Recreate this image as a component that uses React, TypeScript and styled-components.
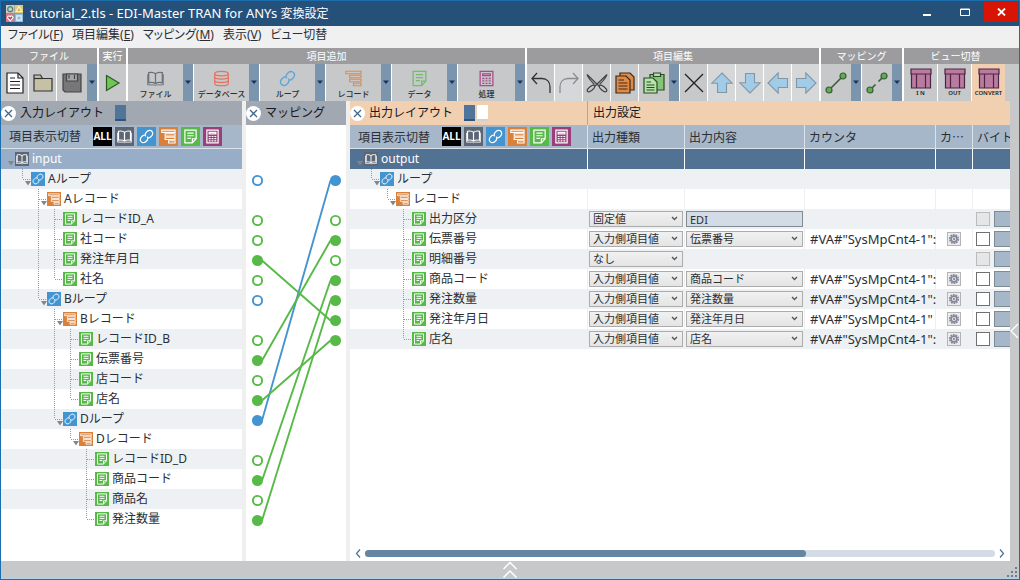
import React from "react";
import styled, { createGlobalStyle } from "styled-components";

const color = {
  frame: "#1b6fae",
  title: "#24507a",
  menu: "#f0f0f0",
  groupHead: "#9c9c9e",
  tool: "#c6c8ca",
  toolLight: "#d6d7d9",
  split: "#7b95ae",
  peach: "#f0d0b1",
  head: "#a1a8b1",
  filter: "#a6b7ca",
  tint: "#edf1f4",
  rootIn: "#98aec8",
  rootOut: "#527294",
  gutter: "#efeff0",
  blue: "#4494cf",
  green: "#57b947",
  orange: "#d9803a",
  slate: "#5c6675",
  purple: "#9a3f7c",
  text: "#2b2e33",
};

const GlobalStyle = createGlobalStyle`
  *, *::before, *::after { box-sizing: border-box; }
  body {
    margin: 0;
    font-family: "Noto Sans", "Noto Sans CJK JP", sans-serif;
    font-size: 12px;
    line-height: 20px;
    color: ${color.text};
  }
  button, input, select { font: inherit; color: inherit; margin: 0; padding: 0; }
  ul { list-style: none; margin: 0; padding: 0; }
  svg { display: block; flex: none; }
`;

/* ---------- window frame ---------- */

const Window = styled.div`
  display: flex;
  flex-direction: column;
  min-height: 100vh;
  border: 1px solid ${color.frame};
  background: ${color.tool};
  overflow: hidden;
`;

const TitleBar = styled.header`
  display: flex;
  align-items: center;
  height: 25px;
  padding: 0 1px 0 5px;
  background: ${color.title};
`;

const Title = styled.h1`
  flex: 1;
  margin: 0 0 0 7px;
  font-size: 13px;
  font-weight: 400;
  color: #fff;
  white-space: nowrap;
`;

const TitleView = styled.span`
  font-size: 12px;
`;

const WindowButton = styled.button<{ $close?: boolean }>`
  display: grid;
  place-items: center;
  align-self: flex-start;
  width: ${(p) => (p.$close ? 34 : 38)}px;
  height: 20px;
  margin-top: 1px;
  border: 0;
  background: ${(p) => (p.$close ? "#d81405" : "transparent")};
`;

const MenuBar = styled.nav`
  display: flex;
  gap: 9px;
  height: 22px;
  padding: 0 7px;
  background: ${color.menu};
`;

const MenuButton = styled.button`
  height: 18px;
  border: 0;
  background: none;
  line-height: 18px;
  font-feature-settings: "palt";
  white-space: nowrap;
`;

/* ---------- tool bar ---------- */

const ToolBar = styled.div`
  display: flex;
  gap: 2px;
  background: #fff;
  overflow: hidden;
`;

const Group = styled.section<{ $grow?: boolean }>`
  display: flex;
  flex-direction: column;
  flex: ${(p) => (p.$grow ? "1 0 auto" : "none")};
  background: ${(p) => (p.$grow ? color.tool : "#fff")};
`;

const GroupName = styled.h2<{ $trail?: boolean }>`
  height: 16px;
  margin: 0;
  padding-right: ${(p) => (p.$trail ? 12 : 0)}px;
  background: ${color.groupHead};
  color: #fff;
  font-size: 10px;
  font-weight: 400;
  line-height: 16px;
  text-align: center;
  white-space: nowrap;
`;

const GroupTools = styled.div`
  display: flex;
  gap: 1px;
  width: max-content;
  height: 37px;
  background: #fff;
`;

const Split = styled.div`
  display: flex;
`;

const ToolButton = styled.button<{ $width: number; $bg?: string }>`
  display: flex;
  flex-direction: column;
  align-items: center;
  justify-content: center;
  width: ${(p) => p.$width}px;
  border: 0;
  background: ${(p) => p.$bg ?? color.tool};
`;

const ToolLabel = styled.span`
  height: 12px;
  font-size: 8px;
  font-weight: 500;
  line-height: 14px;
  white-space: nowrap;
`;

const ViewLabel = styled.span`
  height: 8px;
  color: #222;
  font-size: 6px;
  font-weight: 600;
  line-height: 9px;
`;

const DropButton = styled.button`
  display: grid;
  place-items: center;
  width: 10px;
  border: 0;
  background: ${color.split};
`;

/* ---------- panels ---------- */

const Workspace = styled.main`
  display: flex;
  flex: 1;
  gap: 4px;
  background: ${color.gutter};
`;

const Panel = styled.section<{ $width?: number }>`
  display: flex;
  flex-direction: column;
  flex: ${(p) => (p.$width ? `0 0 ${p.$width}px` : "1 1 0")};
  min-width: 0;
  background: #fff;
`;

const PanelHead = styled.div<{ $bg?: string }>`
  display: flex;
  align-items: center;
  height: 24px;
  background: ${(p) => p.$bg ?? color.head};
`;

const CloseButton = styled.button`
  display: grid;
  place-items: center;
  width: 15px;
  height: 15px;
  border: 0;
  border-radius: 50%;
  background: #fff;
`;

const PanelName = styled.h2`
  margin: 0 11px 0 4px;
  color: #16181b;
  font-size: 12px;
  font-weight: 400;
  white-space: nowrap;
`;

const Swatch = styled.button<{ $bg: string; $edge: string }>`
  width: 11px;
  height: 16px;
  margin-right: 2px;
  border: 0;
  border-bottom: 2px solid ${(p) => p.$edge};
  background: ${(p) => p.$bg};
`;

const FilterRow = styled.div`
  display: flex;
  align-items: center;
  gap: 3px;
  height: 24px;
  padding-left: 8px;
  background: ${color.filter};
  border-bottom: 1px solid #dbe2e9;
  white-space: nowrap;
`;

const FilterLabel = styled.span`
  width: 81px;
`;

const FilterButton = styled.button<{ $bg: string }>`
  display: grid;
  place-items: center;
  width: 19px;
  height: 19px;
  border: 0;
  background: ${(p) => p.$bg};
  color: #fff;
`;

const AllText = styled.span`
  font-family: "Open Sans", "Noto Sans", sans-serif;
  font-size: 10px;
  font-weight: 700;
  line-height: 19px;
`;

/* ---------- trees ---------- */

const TreeList = styled.ul``;

const TreeItem = styled.li<{ $bg: string; $root?: boolean }>`
  height: 20px;
  background: ${(p) => p.$bg};
  color: ${(p) => (p.$root ? "#fff" : color.text)};
`;

const NodeLine = styled.div`
  display: flex;
  align-items: center;
  height: 20px;
  white-space: nowrap;
`;

const NodeIcon = styled.span<{ $bg: string }>`
  display: grid;
  place-items: center;
  flex: none;
  width: 14px;
  height: 14px;
  margin-right: 3px;
  background: ${(p) => p.$bg};
  color: #fff;
`;

/* ---------- output table ---------- */

const TableClip = styled.div`
  flex: 1;
  overflow: hidden;
`;

const Grid = styled.table`
  width: 940px;
  border-collapse: separate;
  border-spacing: 0;
  table-layout: fixed;
`;

const HeadCell = styled.th`
  height: 24px;
  padding: 0;
  background: ${color.peach};
  color: #16181b;
  font-weight: 400;
  text-align: left;
`;

const HeadText = styled.div`
  padding-left: 5px;
  border-left: 1px solid #b3a79c;
  line-height: 24px;
  margin-left: -1px;
`;

const SubHead = styled.th<{ $flush?: boolean }>`
  height: 24px;
  padding: 0 ${(p) => (p.$flush ? 0 : 4)}px;
  background: ${color.filter};
  border-right: 1px solid #dbe2e9;
  border-bottom: ${(p) => (p.$flush ? "0" : "1px solid #dbe2e9")};
  font-family: "Noto Sans CJK JP", sans-serif;
  font-weight: 400;
  line-height: 20px;
  text-align: left;
  white-space: nowrap;
`;

const Row = styled.tr<{ $bg: string; $root?: boolean }>`
  background: ${(p) => p.$bg};
  color: ${(p) => (p.$root ? "#fff" : color.text)};
  & > td {
    height: 20px;
    padding: 0;
    border-right: 1px solid ${(p) => (p.$root ? "#fff" : "#edeff1")};
    white-space: nowrap;
  }
`;

const Field = styled.div`
  position: relative;
  height: 16px;
  margin: 0 1px;
  svg { position: absolute; right: 5px; top: 5px; pointer-events: none; }
`;

const Choice = styled.select`
  display: block;
  width: 100%;
  height: 16px;
  padding-left: 3px;
  appearance: none;
  border: 1px solid #acacac;
  border-radius: 0;
  background: linear-gradient(#f1f1f1, #e4e4e4);
  font-size: 11px;
  line-height: 14px;
`;

const FixedValue = styled.input`
  display: block;
  width: 100%;
  height: 16px;
  padding-left: 3px;
  border: 1px solid #7f8b93;
  border-radius: 0;
  background: #d3dce6;
  font-size: 11px;
  line-height: 14px;
`;

const Counter = styled.div`
  height: 20px;
  padding-left: 5px;
  font-size: 13px;
  line-height: 20px;
`;

const GearButton = styled.button`
  display: grid;
  place-items: center;
  width: 14px;
  height: 14px;
  margin-left: 11px;
  border: 1px solid #b4b4b4;
  background: #ececec;
`;

const ByteLine = styled.div`
  display: flex;
  align-items: center;
  gap: 4px;
  padding-left: 3px;
`;

const Check = styled.input`
  width: 14px;
  height: 14px;
  appearance: none;
  border: 1px solid #707070;
  background: #fff;
  &:disabled { border-color: #bcbcbc; background: #e6e6e6; }
`;

const ByteInput = styled.input`
  width: 60px;
  height: 16px;
  border: 1px solid #7f8b93;
  background: ${color.filter};
`;

const ScrollRow = styled.div`
  display: flex;
  align-items: center;
  gap: 4px;
  height: 15px;
  padding: 0 5px;
`;

const Track = styled.div`
  flex: 1;
  height: 7px;
  border-radius: 4px;
  background: #d3dbe4;
`;

const Thumb = styled.div`
  width: 70%;
  height: 7px;
  border-radius: 4px;
  background: #6585a2;
`;

const PlainButton = styled.button`
  display: grid;
  place-items: center;
  border: 0;
  background: none;
`;

const SideBar = styled.aside`
  display: flex;
  align-items: center;
  width: 9px;
  margin-left: -4px;
  background: ${color.tool};
`;

const Footer = styled.footer`
  display: grid;
  grid-template-columns: 12px 1fr 12px;
  align-items: end;
  justify-items: center;
  height: 18px;
  border-bottom: 1px solid #b3d3ec;
`;

/* ---------- glyphs ---------- */

type Kind = "book" | "loop" | "record" | "data" | "calc" | "db";

const Glyph = ({ kind, size, weight = 1.6 }: { kind: Kind; size: number; weight?: number }) => (
  <svg width={size} height={size} viewBox="0 0 20 20" fill="none" stroke="currentColor" strokeWidth={weight}>
    {kind === "book" && (
      <>
        <path d="M10 4.500C8 2.600 5 2.400 2 3V15C5 14.400 8 14.600 10 16.200C12 14.600 15 14.400 18 15V3C15 2.400 12 2.600 10 4.500V16" />
        <path d="M0.800 5V17.500H8.500L10 18.300L11.500 17.500H19.200V5" strokeWidth={weight * 0.7} />
      </>
    )}
    {kind === "loop" && (
      <>
        <path d="M9 9.800C7.500 7.500 8.800 4.800 11 3C13.500 1 16.500 1.500 17.800 4C19 6.500 17.500 9 15.500 10.600C14.500 11.400 13.200 11.900 12.200 11.800" />
        <path d="M11 10.200C12.500 12.500 11.200 15.200 9 17C6.500 19 3.500 18.500 2.200 16C1 13.500 2.500 11 4.500 9.400C5.500 8.600 6.800 8.100 7.800 8.200" />
      </>
    )}
    {kind === "record" && (
      <path
        d="M1 1.500H18.800V4.500H1ZM5.500 6.200H18.800V9.200H5.500ZM5.500 10.900H18.800V13.900H5.500ZM10 15.600H18.800V18.600H10Z"
        strokeWidth={weight * 0.85}
      />
    )}
    {kind === "data" && (
      <>
        <path d="M2.500 1.500H17.500V13L12.500 18.500H2.500Z" />
        <path d="M17.500 13H12.500V18.500M5.800 5.500H14.200M5.800 9H14.200M5.800 12.500H10.500" />
      </>
    )}
    {kind === "calc" && (
      <>
        <path d="M2.500 1.500H17.500V18.500H2.500ZM5.500 4.500H14.500V6.500H5.500Z" />
        <path d="M5 10H7.500M8.800 10H11.200M12.500 10H15M5 12.900H7.500M8.800 12.900H11.200M12.500 12.900H15M5 15.800H7.500M8.800 15.800H11.200M12.500 15.800H15" />
      </>
    )}
    {kind === "db" && (
      <>
        <ellipse cx="10" cy="4.200" rx="8" ry="2.700" />
        <path d="M2 4.200V15.800C2 19.400 18 19.400 18 15.800V4.200M2 8C2 11.600 18 11.600 18 8M2 12C2 15.600 18 15.600 18 12" />
      </>
    )}
  </svg>
);

const Triangle = () => (
  <svg width="8" height="5" viewBox="0 0 8 5"><path d="M1 0.500H7L4 4Z" fill="#17365c" /></svg>
);

const Cross = () => (
  <svg width="9" height="9" viewBox="0 0 9 9" stroke="#3f668c" strokeWidth="1.300"><path d="M1 1L8 8M8 1L1 8" /></svg>
);

const Chevron = () => (
  <svg width="7" height="5" viewBox="0 0 7 5" fill="none" stroke="#555" strokeWidth="1.300"><path d="M1 1L3.500 3.500L6 1" /></svg>
);

const Logo = () => (
  <svg width="17" height="17" viewBox="0 0 17 17" fill="none" strokeWidth="1.200">
    <path d="M0 0H8.500V8.500H0Z" fill="#c3cfc6" /><path d="M8.500 0H17V8.500H8.500Z" fill="#dfc880" />
    <path d="M0 8.500H8.500V17H0Z" fill="#d97a88" /><path d="M8.500 8.500H17V17H8.500Z" fill="#8fbbdc" />
    <circle cx="4.200" cy="4.200" r="2.500" stroke="#507a72" /><path d="M13 1.500L15.800 6.500H10.200Z" stroke="#fff3c4" fill="#e0b93a" />
    <path d="M4.200 15.800L1.500 12.800C1.500 10.500 4.200 10.500 4.200 12.300C4.200 10.500 7 10.500 7 12.800Z" stroke="#fff" fill="#c93a50" />
    <path d="M10.800 10.800H15.200V15.200H10.800Z" stroke="#e8f5ff" />
  </svg>
);

const NewIcon = () => (
  <svg width="18" height="22" viewBox="0 0 18 22" stroke="#222" strokeWidth="1.200">
    <path d="M1 1H12L17 6V21H1Z" fill="#fff" /><path d="M12 1V6H17M4 6H9M4 9.500H14M4 13H14M4 16.500H14" fill="none" />
  </svg>
);
const OpenIcon = () => (
  <svg width="20" height="18" viewBox="0 0 20 18" stroke="#333" strokeWidth="1.200">
    <path d="M1 17V1H7.500L9.500 4.500H19V17Z" fill="#c5c1a4" /><path d="M1 4.500H9.500" fill="none" />
  </svg>
);
const SaveIcon = () => (
  <svg width="20" height="20" viewBox="0 0 20 20" stroke="#444" strokeWidth="1.200">
    <path d="M1 1H19V19H3L1 17Z" fill="#77777a" /><path d="M4.500 1H15.500V8H4.500Z" fill="#a6a6a8" /><path d="M7 2V5.500M12.500 2V6" />
  </svg>
);
const PlayIcon = () => (
  <svg width="16" height="18" viewBox="0 0 16 18"><path d="M1.500 1.500L14 9L1.500 16.500Z" fill="#72c552" stroke="#2c5a27" strokeWidth="1.200" /></svg>
);
const UndoIcon = ({ flip }: { flip?: boolean }) => (
  <svg width="22" height="22" viewBox="0 0 22 22" fill="none" stroke={flip ? "#8b8d90" : "#333"} strokeWidth="1.300">
    <path d={flip ? "M15 1L20 6.500L15 12M20 6.500H10C5 6.500 2 10 2 15V21" : "M7 1L2 6.500L7 12M2 6.500H12C17 6.500 20 10 20 15V21"} />
  </svg>
);
const CutIcon = () => (
  <svg width="22" height="20" viewBox="0 0 22 20" fill="none" stroke="#444" strokeWidth="1.200">
    <path d="M1 1.500L13.500 13.500M1 1.500C1.500 4.500 4 7 8.500 11.500M21 1.500L8.500 13.500M21 1.500C20.500 4.500 18 7 13.500 11.500" />
    <ellipse cx="5" cy="15.500" rx="4.500" ry="2" transform="rotate(-40 5 15.500)" />
    <ellipse cx="17" cy="15.500" rx="4.500" ry="2" transform="rotate(40 17 15.500)" />
  </svg>
);
const CopyIcon = () => (
  <svg width="20" height="22" viewBox="0 0 20 22" stroke="#3a2a1c" strokeWidth="1.200">
    <path d="M5 1H15L19 5V18H5Z" fill="#e08a48" /><path d="M1 4H11L15 8V21H1Z" fill="#e08a48" />
    <path d="M3.500 8H9M3.500 11H12.500M3.500 14H12.500M3.500 17H12.500" />
  </svg>
);
const PasteIcon = () => (
  <svg width="22" height="22" viewBox="0 0 22 22" stroke="#2c4a2a" strokeWidth="1.200">
    <path d="M7 2.500H21V18H7Z" fill="#86c577" /><path d="M10.500 1H17.500V4.500H10.500Z" fill="#b5dcab" />
    <path d="M1 6H10L14 10V21H1Z" fill="#b5e3a8" /><path d="M3.500 10H8M3.500 13H11.500M3.500 15.500H11.500M3.500 18H11.500" />
  </svg>
);
const DeleteIcon = () => (
  <svg width="20" height="20" viewBox="0 0 20 20" stroke="#222" strokeWidth="1.300"><path d="M1 1L19 19M19 1L1 19" /></svg>
);
const ArrowIcon = ({ turn }: { turn: number }) => (
  <svg width="22" height="22" viewBox="0 0 22 22">
    <path d="M11 1L21.200 11.200H15.500V20.500H6.500V11.200H0.800Z" fill="#a1cbe6" stroke="#8297a6" strokeWidth="1.100" transform={`rotate(${turn} 11 11)`} />
  </svg>
);
const WireIcon = ({ broken }: { broken?: boolean }) => (
  <svg width="22" height="22" viewBox="0 0 22 22" stroke="#3d5a3a" strokeWidth="1.200">
    <path d={broken ? "M5 17L9.500 12.500M12.500 9.500L17 5" : "M5 17L17 5"} strokeWidth="1.600" />
    <circle cx="4" cy="18" r="3" fill="#5fae4d" /><circle cx="18" cy="4" r="3" fill="#5fae4d" />
  </svg>
);
const ViewIcon = () => (
  <svg width="22" height="21" viewBox="0 0 22 21" fill="#bb7aa0" stroke="#4a2640" strokeWidth="1.200">
    <path d="M1.500 5.500H20.500V20H1.500Z" />
    <path d="M1 1H21V6H1Z" />
    <path d="M6.500 6V20M15.500 6V20" />
  </svg>
);

/* ---------- tree drawing ---------- */

const kindColor: Record<Kind, string> = {
  book: color.slate, loop: color.blue, record: color.orange, data: color.green, calc: color.purple, db: "#e2695a",
};

const DownMark = ({ x }: { x: number }) => <path d={`M${x} 12H${x + 6}L${x + 3} 16.500Z`} fill="#858585" />;

/* guide codes: "|" passes through, "T" branches, "L" is the last branch, "." is blank */
const Guide = ({ code, open }: { code: string; open: boolean }) => (
  <svg width="16" height="20" viewBox="0 0 16 20" stroke="#9a9a9a" strokeDasharray="1 1">
    {(code === "|" || code === "T") && <path d="M7.500 0V20" />}
    {code === "L" && <path d="M7.500 0V10" />}
    {(code === "T" || code === "L") && <path d="M8 10.500H16" />}
    {open && <g stroke="none"><DownMark x={10} /></g>}
  </svg>
);

interface TreeNode { name: string; kind: Kind; guides: string }

const Node = ({ node }: { node: TreeNode }) => {
  const last = node.guides.length - 1;
  return (
    <NodeLine>
      <svg width="14" height="20" viewBox="0 0 14 20">{last < 0 && <DownMark x={7} />}</svg>
      {node.guides.split("").map((code, i) => (
        <Guide key={i} code={code} open={i === last && node.kind !== "data"} />
      ))}
      <NodeIcon $bg={kindColor[node.kind]}><Glyph kind={node.kind} size={12} /></NodeIcon>
      {node.name}
    </NodeLine>
  );
};

const inputTree: TreeNode[] = [
  { name: "input", kind: "book", guides: "" },
  { name: "Aループ", kind: "loop", guides: "L" },
  { name: "Aレコード", kind: "record", guides: ".T" },
  { name: "レコードID_A", kind: "data", guides: ".|T" },
  { name: "社コード", kind: "data", guides: ".|T" },
  { name: "発注年月日", kind: "data", guides: ".|T" },
  { name: "社名", kind: "data", guides: ".|L" },
  { name: "Bループ", kind: "loop", guides: ".L" },
  { name: "Bレコード", kind: "record", guides: "..T" },
  { name: "レコードID_B", kind: "data", guides: "..|T" },
  { name: "伝票番号", kind: "data", guides: "..|T" },
  { name: "店コード", kind: "data", guides: "..|T" },
  { name: "店名", kind: "data", guides: "..|L" },
  { name: "Dループ", kind: "loop", guides: "..L" },
  { name: "Dレコード", kind: "record", guides: "...L" },
  { name: "レコードID_D", kind: "data", guides: "....T" },
  { name: "商品コード", kind: "data", guides: "....T" },
  { name: "商品名", kind: "data", guides: "....T" },
  { name: "発注数量", kind: "data", guides: "....L" },
];

interface OutputRow { node: TreeNode; type?: string; value?: string; counter?: string }

const item = (name: string, type: string, value?: string, counter?: string, end = false): OutputRow => ({
  node: { name, kind: "data", guides: end ? "..L" : "..T" }, type, value, counter,
});

const MAPPED = "入力側項目値";
const COUNT = '#VA#"SysMpCnt4-1":';

const outputRows: OutputRow[] = [
  { node: { name: "output", kind: "book", guides: "" } },
  { node: { name: "ループ", kind: "loop", guides: "L" } },
  { node: { name: "レコード", kind: "record", guides: ".L" } },
  item("出力区分", "固定値", "EDI"),
  item("伝票番号", MAPPED, "伝票番号", COUNT),
  item("明細番号", "なし"),
  item("商品コード", MAPPED, "商品コード", COUNT),
  item("発注数量", MAPPED, "発注数量", COUNT),
  item("発注年月日", MAPPED, "発注年月日", '#VA#"SysMpCnt4-1"'),
  item("店名", MAPPED, "店名", COUNT, true),
];

const stripe = (i: number, root: string) => (i === 0 ? root : i % 2 ? color.tint : "#fff");

/* ---------- mapping diagram ---------- */

interface Port { row: number; loop?: boolean; linked?: boolean }

const leftPorts: Port[] = [
  { row: 0, loop: true }, { row: 2 }, { row: 3 }, { row: 4, linked: true }, { row: 5 }, { row: 6, loop: true },
  { row: 8 }, { row: 9, linked: true }, { row: 10 }, { row: 11, linked: true }, { row: 12, loop: true, linked: true },
  { row: 14 }, { row: 15, linked: true }, { row: 16 }, { row: 17, linked: true },
];
const rightPorts: Port[] = [
  { row: 0, loop: true, linked: true }, { row: 2 }, { row: 3, linked: true }, { row: 4 },
  { row: 5, linked: true }, { row: 6, linked: true }, { row: 7, linked: true }, { row: 8, linked: true },
];
const wires = [[12, 0], [4, 7], [9, 3], [11, 8], [15, 5], [17, 6]];
const portY = (row: number) => 55.5 + row * 20;

const Ports = ({ ports, x }: { ports: Port[]; x: number }) => (
  <>
    {ports.map(({ row, loop, linked }) => {
      const tone = loop ? color.blue : color.green;
      return <circle key={row} cx={x} cy={portY(row)} r="4.600" fill={linked ? tone : "#fff"} stroke={tone} strokeWidth="1.900" />;
    })}
  </>
);

const MappingDiagram = () => (
  <svg width="100" height="412" viewBox="0 0 100 412">
    {wires.map(([from, to]) => (
      <path key={from} d={`M16 ${portY(from)}L84.500 ${portY(to)}`} stroke={from === 12 ? color.blue : color.green} strokeWidth="1.900" />
    ))}
    <Ports ports={leftPorts} x={11.5} />
    <Ports ports={rightPorts} x={89.5} />
  </svg>
);

/* ---------- composed parts ---------- */

const SplitTool = ({ width, label, children }: { width: number; label: string; children: React.ReactNode }) => (
  <Split>
    <ToolButton $width={width} aria-label={label}>{children}</ToolButton>
    <DropButton aria-label={`${label} メニュー`}><Triangle /></DropButton>
  </Split>
);

const Filters = () => (
  <FilterRow>
    <FilterLabel>項目表示切替</FilterLabel>
    <FilterButton $bg="#000"><AllText>ALL</AllText></FilterButton>
    {(["book", "loop", "record", "data", "calc"] as Kind[]).map((kind) => (
      <FilterButton key={kind} $bg={kindColor[kind]} aria-label={kind}><Glyph kind={kind} size={15} weight={1.6} /></FilterButton>
    ))}
  </FilterRow>
);

const addTools: { label: string; kind: Kind; tone: string }[] = [
  { label: "ファイル", kind: "book", tone: "#6b7078" },
  { label: "データベース", kind: "db", tone: "#e57363" },
  { label: "ループ", kind: "loop", tone: "#5ba4d4" },
  { label: "レコード", kind: "record", tone: "#df8a48" },
  { label: "データ", kind: "data", tone: "#72bd66" },
  { label: "処理", kind: "calc", tone: "#a94d88" },
];

const ToolGlyph = styled.span<{ $tone: string }>`
  color: ${(p) => p.$tone};
  margin-top: 3px;
`;

const menus: [string, string][] = [["ファイル", "F"], ["項目編集", "E"], ["マッピング", "M"], ["表示", "V"], ["ビュー切替", ""]];

const SelectBox = ({ label, value }: { label: string; value: string }) => (
  <Field>
    <Choice aria-label={label} defaultValue={value}><option>{value}</option></Choice>
    <Chevron />
  </Field>
);

const OutputLine = ({ row, index }: { row: OutputRow; index: number }) => {
  const { node, type, value, counter } = row;
  return (
    <Row $bg={stripe(index, color.rootOut)} $root={index === 0}>
      <td><Node node={node} /></td>
      <td>{type && <SelectBox label={`${node.name} 出力種類`} value={type} />}</td>
      <td>
        {value && counter && <SelectBox label={`${node.name} 出力内容`} value={value} />}
        {value && !counter && <Field><FixedValue aria-label={`${node.name} 出力内容`} defaultValue={value} /></Field>}
      </td>
      <td>{counter && <Counter>{counter}</Counter>}</td>
      <td>
        {counter && (
          <GearButton aria-label="カウンタ設定">
            <svg width="12" height="12" viewBox="0 0 12 12" fill="none" stroke="#85889a">
              <circle cx="6" cy="6" r="4.200" strokeWidth="1.800" strokeDasharray="1.700 0.900" />
              <circle cx="6" cy="6" r="2.900" strokeWidth="1.600" />
              <circle cx="6" cy="6" r="0.800" fill="#85889a" />
            </svg>
          </GearButton>
        )}
      </td>
      <td>
        {type && (
          <ByteLine>
            <Check type="checkbox" aria-label={`${node.name} バイト指定`} disabled={!counter} />
            <ByteInput aria-label={`${node.name} バイト数`} />
          </ByteLine>
        )}
      </td>
    </Row>
  );
};

export default function App() {
  return (
    <>
      <GlobalStyle />
      <Window lang="ja">
        <TitleBar>
          <Logo />
          <Title>tutorial_2.tls - EDI-Master TRAN for ANYs <TitleView>変換設定</TitleView></Title>
          <WindowButton aria-label="最小化">
            <svg width="10" height="10" viewBox="0 0 10 10"><path d="M1 7H9V9H1Z" fill="#fff" /></svg>
          </WindowButton>
          <WindowButton aria-label="最大化">
            <svg width="10" height="9" viewBox="0 0 10 9" fill="none" stroke="#fff"><path d="M0.500 1H9.500V7.500H0.500ZM0 1.500H10" /></svg>
          </WindowButton>
          <WindowButton $close aria-label="閉じる">
            <svg width="9" height="8" viewBox="0 0 9 8" stroke="#fff" strokeWidth="1.800"><path d="M1 0.500L8 7.500M8 0.500L1 7.500" /></svg>
          </WindowButton>
        </TitleBar>

        <MenuBar>
          {menus.map(([name, key]) => (
            <MenuButton key={name}>{name}{key && <>(<u>{key}</u>)</>}</MenuButton>
          ))}
        </MenuBar>

        <ToolBar>
          <Group>
            <GroupName>ファイル</GroupName>
            <GroupTools>
              <ToolButton $width={27} aria-label="新規"><NewIcon /></ToolButton>
              <ToolButton $width={27} aria-label="開く"><OpenIcon /></ToolButton>
              <SplitTool width={30} label="保存"><SaveIcon /></SplitTool>
            </GroupTools>
          </Group>
          <Group>
            <GroupName>実行</GroupName>
            <GroupTools><ToolButton $width={27} aria-label="実行"><PlayIcon /></ToolButton></GroupTools>
          </Group>
          <Group>
            <GroupName>項目追加</GroupName>
            <GroupTools>
              {addTools.map(({ label, kind, tone }, i) => (
                <SplitTool key={label} width={i === 5 ? 57 : 55} label={label}>
                  <ToolGlyph $tone={tone}><Glyph kind={kind} size={17} weight={1.5} /></ToolGlyph>
                  <ToolLabel>{label}</ToolLabel>
                </SplitTool>
              ))}
            </GroupTools>
          </Group>
          <Group>
            <GroupName>項目編集</GroupName>
            <GroupTools>
              <ToolButton $width={27} aria-label="元に戻す"><UndoIcon /></ToolButton>
              <ToolButton $width={27} $bg={color.toolLight} aria-label="やり直し"><UndoIcon flip /></ToolButton>
              <ToolButton $width={27} aria-label="切り取り"><CutIcon /></ToolButton>
              <ToolButton $width={27} aria-label="コピー"><CopyIcon /></ToolButton>
              <SplitTool width={30} label="貼り付け"><PasteIcon /></SplitTool>
              <ToolButton $width={27} aria-label="削除"><DeleteIcon /></ToolButton>
              {[0, 180, 270, 90].map((turn) => (
                <ToolButton key={turn} $width={27} $bg={color.toolLight} aria-label="移動"><ArrowIcon turn={turn} /></ToolButton>
              ))}
            </GroupTools>
          </Group>
          <Group>
            <GroupName>マッピング</GroupName>
            <GroupTools>
              <SplitTool width={30} label="接続"><WireIcon /></SplitTool>
              <SplitTool width={30} label="切断"><WireIcon broken /></SplitTool>
            </GroupTools>
          </Group>
          <Group $grow>
            <GroupName $trail>ビュー切替</GroupName>
            <GroupTools>
              {["I N", "OUT", "CONVERT"].map((name) => (
                <ToolButton key={name} $width={33} $bg={name === "CONVERT" ? color.peach : undefined}>
                  <ViewIcon />
                  <ViewLabel>{name}</ViewLabel>
                </ToolButton>
              ))}
            </GroupTools>
          </Group>
        </ToolBar>

        <Workspace>
          <Panel $width={241}>
            <PanelHead>
              <CloseButton aria-label="閉じる"><Cross /></CloseButton>
              <PanelName>入力レイアウト</PanelName>
              <Swatch $bg="#50749a" $edge="#2d567f" aria-label="表示色" />
            </PanelHead>
            <Filters />
            <TreeList>
              {inputTree.map((node, i) => (
                <TreeItem key={i} $bg={stripe(i, color.rootIn)} $root={i === 0}><Node node={node} /></TreeItem>
              ))}
            </TreeList>
          </Panel>

          <Panel $width={100}>
            <PanelHead>
              <CloseButton aria-label="閉じる"><Cross /></CloseButton>
              <PanelName>マッピング</PanelName>
            </PanelHead>
            <MappingDiagram />
          </Panel>

          <Panel>
            <TableClip>
              <Grid>
                <colgroup>
                  <col width="238" /><col width="97" /><col width="120" /><col width="131" /><col width="37" /><col />
                </colgroup>
                <thead>
                  <tr>
                    <HeadCell>
                      <PanelHead $bg={color.peach}>
                        <CloseButton aria-label="閉じる"><Cross /></CloseButton>
                        <PanelName>出力レイアウト</PanelName>
                        <Swatch $bg="#50749a" $edge="#2d567f" aria-label="表示色" />
                        <Swatch $bg="#fff" $edge="#d0d0d0" aria-label="背景色" />
                      </PanelHead>
                    </HeadCell>
                    <HeadCell colSpan={5}><HeadText>出力設定</HeadText></HeadCell>
                  </tr>
                  <tr>
                    <SubHead $flush><Filters /></SubHead>
                    <SubHead>出力種類</SubHead>
                    <SubHead>出力内容</SubHead>
                    <SubHead>カウンタ</SubHead>
                    <SubHead>カ⋯</SubHead>
                    <SubHead>バイト</SubHead>
                  </tr>
                </thead>
                <tbody>
                  {outputRows.map((row, i) => <OutputLine key={i} row={row} index={i} />)}
                </tbody>
              </Grid>
            </TableClip>
            <ScrollRow>
              <PlainButton aria-label="左へ">
                <svg width="6" height="9" viewBox="0 0 6 9" fill="none" stroke="#4b6f96" strokeWidth="1.200"><path d="M5 0.500L1.500 4.500L5 8.500" /></svg>
              </PlainButton>
              <Track><Thumb /></Track>
              <PlainButton aria-label="右へ">
                <svg width="6" height="9" viewBox="0 0 6 9" fill="none" stroke="#4b6f96" strokeWidth="1.200"><path d="M1 0.500L4.500 4.500L1 8.500" /></svg>
              </PlainButton>
            </ScrollRow>
          </Panel>

          <SideBar>
            <PlainButton aria-label="パネルを開く">
              <svg width="9" height="16" viewBox="0 0 9 16" fill="none" stroke="#fff" strokeWidth="1.300"><path d="M8 1L1 8L8 15" /></svg>
            </PlainButton>
          </SideBar>
        </Workspace>

        <Footer>
          <span />
          <PlainButton aria-label="下部パネルを開く">
            <svg width="16" height="17" viewBox="0 0 16 17" fill="none" stroke="#fff" strokeWidth="1.500"><path d="M1.500 8L8 1.500L14.500 8M1.500 16.500L8 10L14.500 16.500" /></svg>
          </PlainButton>
          <svg width="12" height="12" viewBox="0 0 12 12" fill="#6a7f93">
            <path d="M8 1H10V3H8ZM8 5H10V7H8ZM4 5H6V7H4ZM8 9H10V11H8ZM4 9H6V11H4ZM0 9H2V11H0Z" />
          </svg>
        </Footer>
      </Window>
    </>
  );
}
